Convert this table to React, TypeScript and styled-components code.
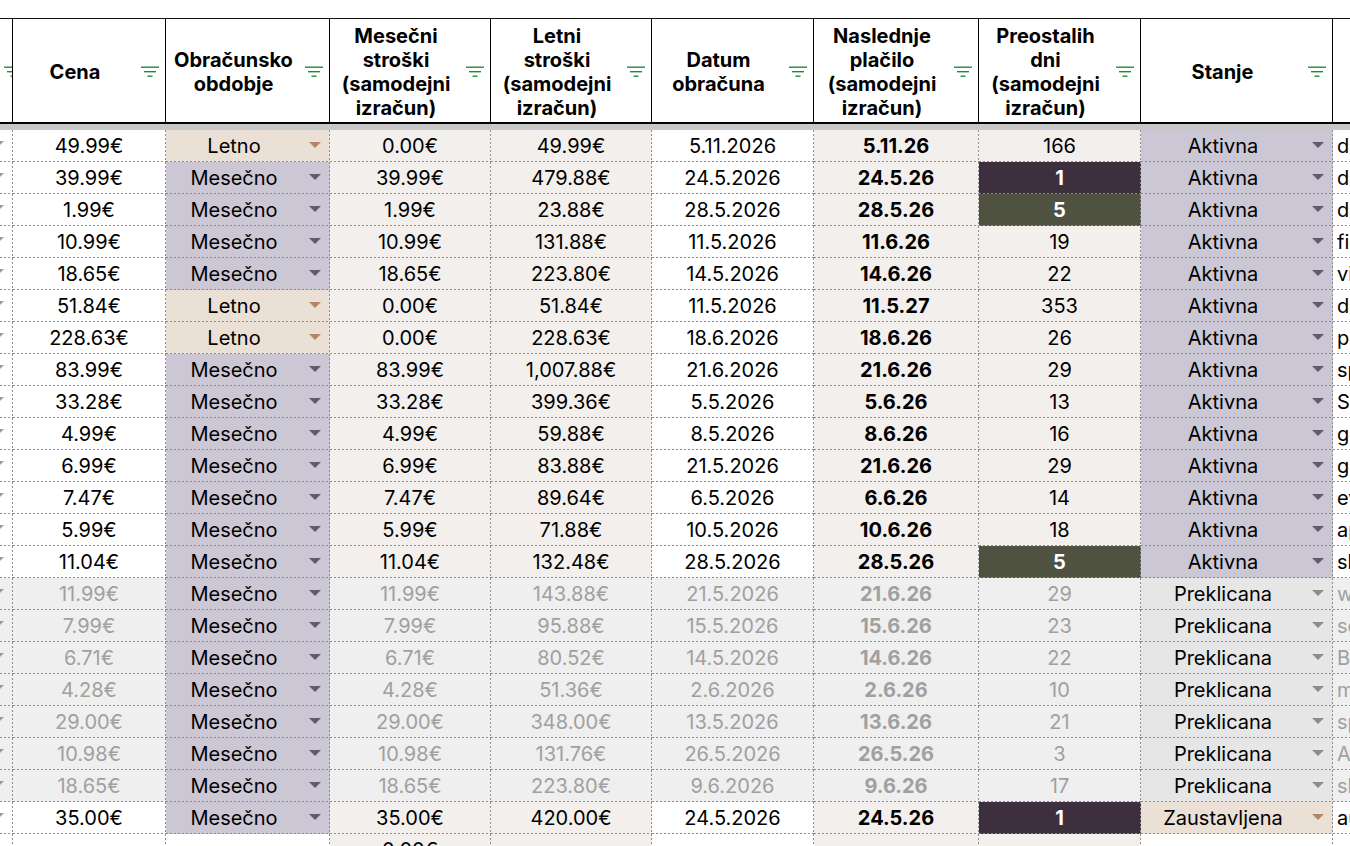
import React from 'react';
import styled, { createGlobalStyle, css } from 'styled-components';

const GlobalStyle = createGlobalStyle`
  html, body { margin: 0; padding: 0; background: #ffffff; overflow: hidden; }
  body { font-family: Inter, "Noto Sans", sans-serif; color: #000; }
  * { box-sizing: border-box; }
`;

const COLS = '13px 153px 164px 161px 161px 162px 165px 162px 192px 240px';

const C = {
  pink: '#f3efec',
  lavender: '#cbc7d4',
  beige: '#ebe0d6',
  gray: '#efefef',
  grayChip: '#e6e6e6',
  purple: '#3e2f3f',
  olive: '#4f5241',
  dots: '#8e8e8e',
  muted: '#a0a0a0',
  green: '#1e8e3e',
};

const Sheet = styled.div`
  padding-top: 18px;
  width: 1413px;
`;

const HeaderRow = styled.div`
  display: grid;
  grid-template-columns: ${COLS};
  height: 106px;
  border-top: 1px solid #111;
  border-bottom: 2px solid #000;
`;

const HeaderCell = styled.div<{ $last?: boolean }>`
  display: flex;
  align-items: center;
  gap: 4px;
  padding: 2px 6px 0 0;
  border-right: ${(p) => (p.$last ? 'none' : '1px solid #000')};
  overflow: hidden;
  min-width: 0;
`;

const HeaderText = styled.div`
  flex: 1;
  min-width: 0;
  text-align: center;
  font-weight: 700;
  font-size: 20px;
  line-height: 24px;
  white-space: nowrap;
  margin-top: 1px;
`;

const FilterIcon = styled.svg`
  flex: none;
  width: 18px;
  height: 12px;
`;

const Band = styled.div`
  height: 6px;
  background: #c8c8c8;
`;

const Row = styled.div`
  display: grid;
  grid-template-columns: ${COLS};
  height: 32px;
`;

const dotted = css`
  background-image:
    repeating-linear-gradient(to right, ${C.dots} 0 2px, transparent 2px 4px),
    repeating-linear-gradient(to bottom, ${C.dots} 0 2px, transparent 2px 4px);
  background-size: 100% 1px, 1px 100%;
  background-position: left bottom, right top;
  background-repeat: no-repeat;
`;

const Cell = styled.div<{ $bg?: string; $muted?: boolean; $bold?: boolean; $light?: boolean; $left?: boolean }>`
  ${dotted};
  background-color: ${(p) => p.$bg || '#fff'};
  display: flex;
  align-items: center;
  justify-content: ${(p) => (p.$left ? 'flex-start' : 'center')};
  padding: 0 1px 0 ${(p) => (p.$left ? '4px' : '0')};
  font-size: 20px;
  font-weight: ${(p) => (p.$bold ? 700 : 400)};
  color: ${(p) => (p.$light ? '#fff' : p.$muted ? C.muted : '#000')};
  white-space: nowrap;
  overflow: hidden;
  min-width: 0;
`;

const ChipCell = styled.div<{ $bg: string }>`
  ${dotted};
  background-color: ${(p) => p.$bg};
  display: flex;
  align-items: center;
  gap: 7px;
  padding: 0 9px 0 0;
  font-size: 20px;
  white-space: nowrap;
  overflow: hidden;
  min-width: 0;
`;

const ChipText = styled.span`
  flex: 1;
  text-align: center;
`;

const Arrow = styled.span<{ $color: string }>`
  flex: none;
  width: 0;
  height: 0;
  border-left: 6px solid transparent;
  border-right: 6px solid transparent;
  border-top: 6px solid ${(p) => p.$color};
  margin-top: -2px;
`;

const EdgeCell = styled.div<{ $bg?: string }>`
  ${dotted};
  background-color: ${(p) => p.$bg || '#fff'};
  display: flex;
  align-items: center;
  justify-content: flex-end;
  padding-right: 9px;
`;

const EdgeArrow = styled.span`
  flex: none;
  width: 0;
  height: 0;
  margin-top: -6px;
  border-left: 5px solid transparent;
  border-right: 5px solid transparent;
  border-top: 5px solid #9a9a9a;
`;

const Filter = () => (
  <FilterIcon viewBox="0 0 18 12">
    <rect x="0" y="0.5" width="18" height="1.4" fill={C.green} />
    <rect x="3" y="5" width="12" height="1.4" fill={C.green} />
    <rect x="6.5" y="9.5" width="5" height="1.4" fill={C.green} />
  </FilterIcon>
);

const headers: string[][] = [
  [],
  ['Cena'],
  ['Obračunsko', 'obdobje'],
  ['Mesečni', 'stroški', '(samodejni', 'izračun)'],
  ['Letni', 'stroški', '(samodejni', 'izračun)'],
  ['Datum', 'obračuna'],
  ['Naslednje', 'plačilo', '(samodejni', 'izračun)'],
  ['Preostalih', 'dni', '(samodejni', 'izračun)'],
  ['Stanje'],
];

type Period = 'Letno' | 'Mesečno';
type Status = 'Aktivna' | 'Preklicana' | 'Zaustavljena';
type Flag = 'purple' | 'olive' | undefined;

interface Sub {
  price: string;
  period: Period;
  monthly: string;
  yearly: string;
  date: string;
  next: string;
  days: string;
  flag?: Flag;
  status: Status;
  name: string;
}

const rows: Sub[] = [
  { price: '49.99€', period: 'Letno', monthly: '0.00€', yearly: '49.99€', date: '5.11.2026', next: '5.11.26', days: '166', status: 'Aktivna', name: 'disney plus' },
  { price: '39.99€', period: 'Mesečno', monthly: '39.99€', yearly: '479.88€', date: '24.5.2026', next: '24.5.26', days: '1', flag: 'purple', status: 'Aktivna', name: 'dropbox' },
  { price: '1.99€', period: 'Mesečno', monthly: '1.99€', yearly: '23.88€', date: '28.5.2026', next: '28.5.26', days: '5', flag: 'olive', status: 'Aktivna', name: 'duolingo' },
  { price: '10.99€', period: 'Mesečno', monthly: '10.99€', yearly: '131.88€', date: '11.5.2026', next: '11.6.26', days: '19', status: 'Aktivna', name: 'figma' },
  { price: '18.65€', period: 'Mesečno', monthly: '18.65€', yearly: '223.80€', date: '14.5.2026', next: '14.6.26', days: '22', status: 'Aktivna', name: 'vimeo' },
  { price: '51.84€', period: 'Letno', monthly: '0.00€', yearly: '51.84€', date: '11.5.2026', next: '11.5.27', days: '353', status: 'Aktivna', name: 'domena' },
  { price: '228.63€', period: 'Letno', monthly: '0.00€', yearly: '228.63€', date: '18.6.2026', next: '18.6.26', days: '26', status: 'Aktivna', name: 'patreon' },
  { price: '83.99€', period: 'Mesečno', monthly: '83.99€', yearly: '1,007.88€', date: '21.6.2026', next: '21.6.26', days: '29', status: 'Aktivna', name: 'spotify' },
  { price: '33.28€', period: 'Mesečno', monthly: '33.28€', yearly: '399.36€', date: '5.5.2026', next: '5.6.26', days: '13', status: 'Aktivna', name: 'Slack' },
  { price: '4.99€', period: 'Mesečno', monthly: '4.99€', yearly: '59.88€', date: '8.5.2026', next: '8.6.26', days: '16', status: 'Aktivna', name: 'google one' },
  { price: '6.99€', period: 'Mesečno', monthly: '6.99€', yearly: '83.88€', date: '21.5.2026', next: '21.6.26', days: '29', status: 'Aktivna', name: 'github' },
  { price: '7.47€', period: 'Mesečno', monthly: '7.47€', yearly: '89.64€', date: '6.5.2026', next: '6.6.26', days: '14', status: 'Aktivna', name: 'evernote' },
  { price: '5.99€', period: 'Mesečno', monthly: '5.99€', yearly: '71.88€', date: '10.5.2026', next: '10.6.26', days: '18', status: 'Aktivna', name: 'apple music' },
  { price: '11.04€', period: 'Mesečno', monthly: '11.04€', yearly: '132.48€', date: '28.5.2026', next: '28.5.26', days: '5', flag: 'olive', status: 'Aktivna', name: 'shopify' },
  { price: '11.99€', period: 'Mesečno', monthly: '11.99€', yearly: '143.88€', date: '21.5.2026', next: '21.6.26', days: '29', status: 'Preklicana', name: 'wix' },
  { price: '7.99€', period: 'Mesečno', monthly: '7.99€', yearly: '95.88€', date: '15.5.2026', next: '15.6.26', days: '23', status: 'Preklicana', name: 'scribd' },
  { price: '6.71€', period: 'Mesečno', monthly: '6.71€', yearly: '80.52€', date: '14.5.2026', next: '14.6.26', days: '22', status: 'Preklicana', name: 'Bitwarden' },
  { price: '4.28€', period: 'Mesečno', monthly: '4.28€', yearly: '51.36€', date: '2.6.2026', next: '2.6.26', days: '10', status: 'Preklicana', name: 'medium' },
  { price: '29.00€', period: 'Mesečno', monthly: '29.00€', yearly: '348.00€', date: '13.5.2026', next: '13.6.26', days: '21', status: 'Preklicana', name: 'spotify family' },
  { price: '10.98€', period: 'Mesečno', monthly: '10.98€', yearly: '131.76€', date: '26.5.2026', next: '26.5.26', days: '3', status: 'Preklicana', name: 'Adobe' },
  { price: '18.65€', period: 'Mesečno', monthly: '18.65€', yearly: '223.80€', date: '9.6.2026', next: '9.6.26', days: '17', status: 'Preklicana', name: 'shutterstock' },
  { price: '35.00€', period: 'Mesečno', monthly: '35.00€', yearly: '420.00€', date: '24.5.2026', next: '24.5.26', days: '1', flag: 'purple', status: 'Zaustavljena', name: 'audible' },
];

const periodStyle: Record<Period, { bg: string; arrow: string }> = {
  Letno: { bg: C.beige, arrow: '#b5876a' },
  Mesečno: { bg: C.lavender, arrow: '#625b6e' },
};

const statusStyle: Record<Status, { bg: string; arrow: string }> = {
  Aktivna: { bg: C.lavender, arrow: '#625b6e' },
  Preklicana: { bg: C.grayChip, arrow: '#8c8c8c' },
  Zaustavljena: { bg: C.beige, arrow: '#b5876a' },
};

const Chip = ({ label, bg, arrow }: { label: string; bg: string; arrow: string }) => (
  <ChipCell $bg={bg}>
    <ChipText>{label}</ChipText>
    <Arrow $color={arrow} />
  </ChipCell>
);

const DataRow = ({ r }: { r: Sub }) => {
  const off = r.status === 'Preklicana';
  const plain = off ? C.gray : '#fff';
  const calc = off ? C.gray : C.pink;
  const flagBg = r.flag === 'purple' ? C.purple : r.flag === 'olive' ? C.olive : undefined;
  return (
    <Row>
      <EdgeCell $bg={plain}>
        <EdgeArrow />
      </EdgeCell>
      <Cell $bg={plain} $muted={off}>{r.price}</Cell>
      <Chip label={r.period} {...periodStyle[r.period]} />
      <Cell $bg={calc} $muted={off}>{r.monthly}</Cell>
      <Cell $bg={calc} $muted={off}>{r.yearly}</Cell>
      <Cell $bg={plain} $muted={off}>{r.date}</Cell>
      <Cell $bg={calc} $muted={off} $bold>{r.next}</Cell>
      <Cell $bg={flagBg || calc} $muted={off} $bold={!!flagBg} $light={!!flagBg}>{r.days}</Cell>
      <Chip label={r.status} {...statusStyle[r.status]} />
      <Cell $bg={plain} $muted={off} $left>{r.name}</Cell>
    </Row>
  );
};

export default function App() {
  return (
    <>
      <GlobalStyle />
      <Sheet>
        <HeaderRow>
          {headers.map((lines, i) => (
            <HeaderCell key={i}>
              <HeaderText>
                {lines.map((l, j) => (
                  <React.Fragment key={j}>
                    {j > 0 && <br />}
                    {l}
                  </React.Fragment>
                ))}
              </HeaderText>
              <Filter />
            </HeaderCell>
          ))}
          <HeaderCell $last />
        </HeaderRow>
        <Band />
        {rows.map((r, i) => (
          <DataRow key={i} r={r} />
        ))}
        <Row>
          <EdgeCell />
          <Cell />
          <Cell />
          <Cell $bg={C.pink}>0.00€</Cell>
          <Cell $bg={C.pink} />
          <Cell />
          <Cell $bg={C.pink} />
          <Cell $bg={C.pink} />
          <Cell />
          <Cell $left />
        </Row>
      </Sheet>
    </>
  );
}
